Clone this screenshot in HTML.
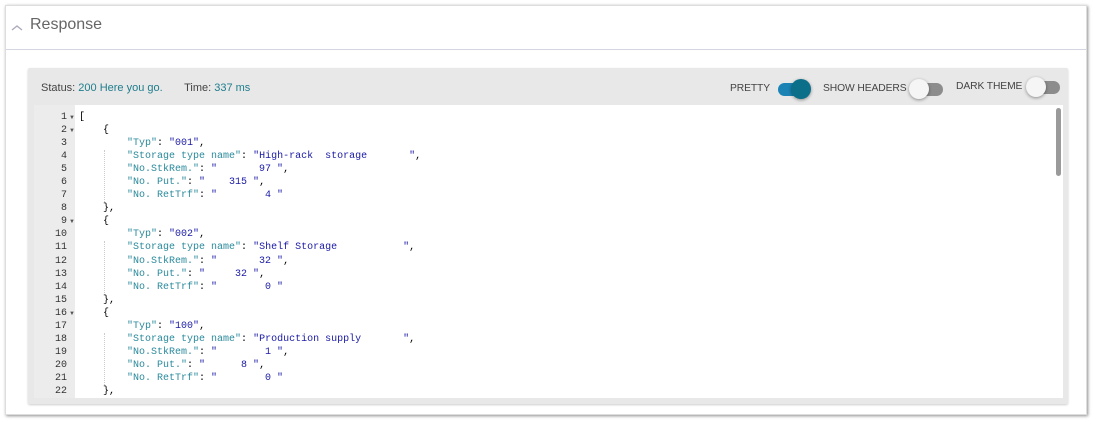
<!DOCTYPE html>
<html><head><style>
body{margin:0;width:1097px;height:424px;background:#fff;position:relative;overflow:hidden;font-family:"Liberation Sans",sans-serif}
.card{position:absolute;left:5px;top:5px;width:1082px;height:410px;background:#fff;box-shadow:1px 1px 3px rgba(0,0,0,.45);border:1px solid #ddd;box-sizing:border-box}
.hd{position:absolute;left:0;top:0;width:100%;height:43px;border-bottom:1px solid #d3d6e0}
.hd .t{position:absolute;left:24px;top:10px;font-size:16px;color:#666}
.hd svg{position:absolute;left:5px;top:18px}
.pn{position:absolute;left:22px;top:62px;width:1040px;height:336px;background:#e8e8e8;border-radius:2px;box-shadow:0 1px 2px rgba(0,0,0,.2)}
.st{position:absolute;left:13px;top:14px;font-size:11px;color:#444}
.st b{font-weight:normal;color:#1f7d8c}
.lbl{position:absolute;font-size:10.3px;color:#444;top:15px;letter-spacing:-0.1px}
.tg{position:absolute;width:32px;height:13px;border-radius:7px;top:15px}
.kn{position:absolute;width:20px;height:20px;border-radius:50%;top:-4px;box-shadow:0 1px 3px rgba(0,0,0,.4)}
.ed{position:absolute;left:6px;top:37px;width:1029px;height:293px;background:#fff;overflow:hidden}
.gut{position:absolute;left:0;top:0;width:41px;height:100%;background:#ececec}
pre{margin:0;font-family:"Liberation Mono",monospace;font-size:10px;line-height:13.05px}
.num{position:absolute;left:0;top:6px;width:33px;text-align:right;color:#333}
.ar{position:absolute;left:35px;font-size:6px;color:#555}
.code{position:absolute;left:45px;top:6px;color:#000}
.k{color:#2a8a9c}.s{color:#1a1aa6}
.sb{position:absolute;left:1022px;top:3px;width:5px;height:68px;background:#9a9a9a;border-radius:3px}
.gd{position:absolute;width:0;border-left:1px dotted #ccc}
</style></head><body>
<div class="card">
<div class="hd"><svg width="12" height="8"><path d="M1 6 L6 2 L11 6" stroke="#aab" stroke-width="1.3" fill="none"/></svg><span class="t">Response</span></div>
<div class="pn">
<div class="st">Status: <b>200 Here you go.</b>&nbsp;&nbsp;&nbsp;&nbsp;&nbsp;&nbsp;&nbsp;Time: <b>337 ms</b></div>
<span class="lbl" style="left:702px">PRETTY</span>
<div class="tg" style="left:750px;background:#1c84b5"><div class="kn" style="left:13px;background:#0c6f8a"></div></div>
<span class="lbl" style="left:795px">SHOW HEADERS</span>
<div class="tg" style="left:883px;background:#8c8c8c"><div class="kn" style="left:-2px;background:#f5f5f5"></div></div>
<span class="lbl" style="left:928px;top:13px">DARK THEME</span>
<div class="tg" style="left:1000px;top:13px;background:#8c8c8c"><div class="kn" style="left:-2px;background:#f5f5f5"></div></div>
<div class="ed">
<div class="gut"></div>
<pre class="num">1
2
3
4
5
6
7
8
9
10
11
12
13
14
15
16
17
18
19
20
21
22</pre>
<span class="ar" style="top:10px">▼</span><span class="ar" style="top:23px">▼</span><span class="ar" style="top:114px">▼</span><span class="ar" style="top:206px">▼</span>
<div class="gd" style="left:70px;top:45px;height:52px"></div>
<div class="gd" style="left:70px;top:136px;height:52px"></div>
<div class="gd" style="left:70px;top:228px;height:52px"></div>
<pre class="code">[
    {
        <span class="k">"Typ"</span>: <span class="s">"001"</span>,
        <span class="k">"Storage type name"</span>: <span class="s">"High-rack  storage       "</span>,
        <span class="k">"No.StkRem."</span>: <span class="s">"       97 "</span>,
        <span class="k">"No. Put."</span>: <span class="s">"    315 "</span>,
        <span class="k">"No. RetTrf"</span>: <span class="s">"        4 "</span>
    },
    {
        <span class="k">"Typ"</span>: <span class="s">"002"</span>,
        <span class="k">"Storage type name"</span>: <span class="s">"Shelf Storage           "</span>,
        <span class="k">"No.StkRem."</span>: <span class="s">"       32 "</span>,
        <span class="k">"No. Put."</span>: <span class="s">"     32 "</span>,
        <span class="k">"No. RetTrf"</span>: <span class="s">"        0 "</span>
    },
    {
        <span class="k">"Typ"</span>: <span class="s">"100"</span>,
        <span class="k">"Storage type name"</span>: <span class="s">"Production supply       "</span>,
        <span class="k">"No.StkRem."</span>: <span class="s">"        1 "</span>,
        <span class="k">"No. Put."</span>: <span class="s">"      8 "</span>,
        <span class="k">"No. RetTrf"</span>: <span class="s">"        0 "</span>
    },</pre>
<div class="sb"></div>
</div>
</div>
</div>
</body></html>
